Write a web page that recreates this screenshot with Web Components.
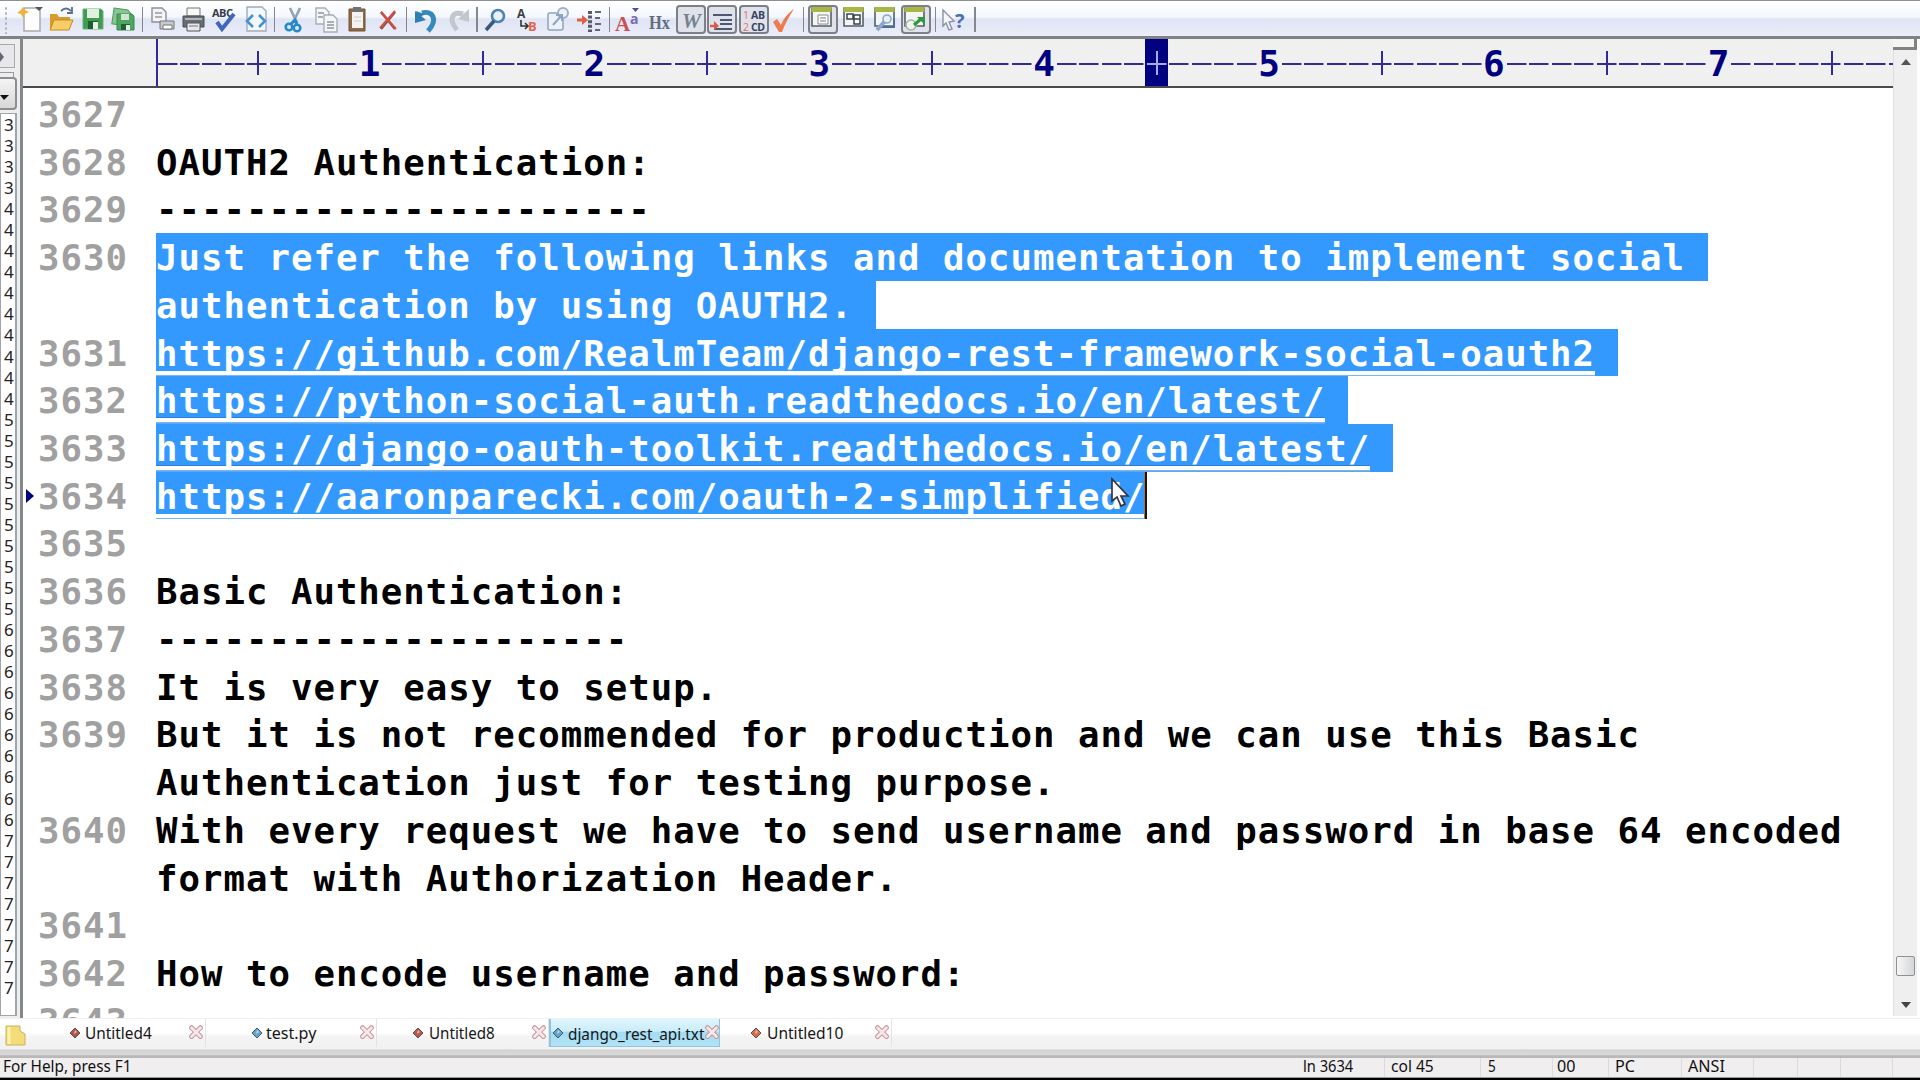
<!DOCTYPE html>
<html lang="en">
<head>
<meta charset="utf-8">
<title>django_rest_api.txt</title>
<style>
html,body{margin:0;height:1080px;width:1920px;overflow:hidden;background:#000}
</style>
</head>
<body>
<edit-app></edit-app>
<script>
const def=(name,css,html,init)=>customElements.define(name,class extends HTMLElement{
  connectedCallback(){
    if(this.shadowRoot)return;
    const r=this.attachShadow({mode:'open'});
    r.innerHTML='<style>'+css+'</style>'+(typeof html==='function'?html(this):html);
    if(init)init(this,r);
  }
});

/* text squeezed to a given pixel width */
def('fit-text',
 ':host{display:block;white-space:pre;flex:none;overflow:visible}span{display:inline-block;transform-origin:0 50%}',
 '<span><slot></slot></span>',
 (el,r)=>{const w=+el.getAttribute('w');el.style.width=w+'px';
   const s=r.querySelector('span');s.style.transform='scaleX('+w/s.offsetWidth+')';});

const win='<path d="M3 4h19v18H3z" fill="#f4f6f4" stroke="#54606c" stroke-width="1.6"/><path d="M2.5 3h20v5h-20z" fill="#a9b545"/>';
const ICONS={
 new:'<path d="M7 4h16v23H7z" fill="#fdfdfb" stroke="#a9a9ae" stroke-width="1.5"/><path d="M6 3l2 3 4 2-4 2-2 4-2-4-4-1 4-3z" fill="#efb23e"/><path d="M18 3h8l-4 4z" fill="#555"/>',
 open:'<path d="M3 25V10h7l2 3h11v12z" fill="#d99b2b"/><path d="M3 26l4-10h19l-4 10z" fill="#f6cd66" stroke="#c58b27"/><path d="M14 7q5-5 10 0M25 3v6h-5" fill="none" stroke="#5b6f93" stroke-width="1.8"/>',
 save:'<path d="M4 5h18l2 2v18H4z" fill="#3f9b50" stroke="#71b07b"/><path d="M8 5h12v9H8z" fill="#dff0df"/><path d="M9 17h10v8H9z" fill="#1d5d34"/><path d="M14 18h5v7h-5z" fill="#e7f2e8"/>',
 saveall:'<path d="M4 5h14l3 3v13H4z" fill="#8ac492" stroke="#4d9b5c" transform="rotate(8 12 12)"/><path d="M8 10h15l2 2v14H8z" fill="#4fa660" stroke="#3a8a4b"/><path d="M12 10h8v6h-8z" fill="#cfe7d0"/><path d="M12 20h9v6h-9z" fill="#225f35"/><path d="M17 21h4v5h-4z" fill="#e2f0e2"/>',
 preview:'<path d="M4 4h10l4 4v10H4z" fill="#f4f4f6" stroke="#8f8f94" stroke-width="1.4"/><path d="M7 9h7M7 13h7" stroke="#999" stroke-width="1.5"/><path d="M12 17h14v8H12z" fill="#c6c9cd" stroke="#75777c"/><path d="M15 21h9v4h-9z" fill="#fff" stroke="#777"/>',
 print:'<path d="M8 4h13v8H8z" fill="#f8f8f8" stroke="#777"/><path d="M4 12h21v11H4z" fill="#686c73" stroke="#494d54"/><path d="M6 15h17" stroke="#b3b6bb" stroke-width="2"/><path d="M8 19h13v8H8z" fill="#e6e8ea" stroke="#555"/><path d="M10 22h9" stroke="#777"/>',
 spell:'<text x="1" y="13" font-size="11" font-weight="700" fill="#353b47" textLength="21">ABC</text><path d="M6 18l5 7 12-15" fill="none" stroke="#3f66b8" stroke-width="4"/>',
 code:'<path d="M5 3h15l4 4v20H5z" fill="#f4f7fb" stroke="#a3acba" stroke-width="1.4"/><path d="M11 11l-6 6 6 6M17 11l6 6-6 6" fill="none" stroke="#4492d0" stroke-width="2.6"/>',
 cut:'<path d="M10 4l7 15M20 4l-7 15" stroke="#8fa4b8" stroke-width="2.6"/><circle cx="9" cy="23" r="3.3" fill="none" stroke="#258bc7" stroke-width="2.6"/><circle cx="17" cy="24" r="3.3" fill="none" stroke="#258bc7" stroke-width="2.6"/><path d="M11 20l4-4 2 4" stroke="#258bc7" stroke-width="3" fill="none"/>',
 copy:'<g fill="#f5f6f8" stroke="#a8adb5" stroke-width="1.4"><path d="M4 4h9l4 4v12H4z"/><path d="M12 11h9l4 4v13H12z"/></g><path d="M6 9h6M6 13h5M15 18h7M15 21h7M15 24h7" stroke="#8e959f" stroke-width="1.3"/>',
 paste:'<path d="M6 5h16v22H6z" fill="#8e6a45" stroke="#6d5238"/><path d="M9 8h11v16H9z" fill="#f4f3f1"/><path d="M10 3h8v5h-8z" fill="#6e7176"/><path d="M11 13h7M11 17h7" stroke="#ccc"/>',
 del:'<path d="M7 8l14 17M21 8L7 25" stroke="#7e5a58" stroke-width="2.6"/><path d="M7 8l15 17M21 7L6 24" stroke="#d84c3c" stroke-width="2"/>',
 undo:'<path d="M9 9c10-3 17 6 6 18" fill="none" stroke="#3489bd" stroke-width="5"/><path d="M2 7v12l11-3z" fill="#2f7fb3"/><path d="M3 7l8 3-5 5z" fill="#2f7fb3"/>',
 redo:'<path d="M19 10C8 7 4 15 13 26" fill="none" stroke="#c3c7cd" stroke-width="5"/><path d="M25 5v13l-11-3z" fill="#c3c7cd"/>',
 find:'<circle cx="16" cy="12" r="6" fill="#e7f1fb" stroke="#4e82b3" stroke-width="2.6"/><path d="M12 17l-8 9" stroke="#38597c" stroke-width="3.6"/>',
 repl:'<text x="3" y="14" font-size="12" font-weight="700" fill="#3c3f46">A</text><text x="14" y="27" font-size="13" font-weight="700" fill="#e2644e">B</text><path d="M7 16v6h6M11 19l3 3-3 3" fill="none" stroke="#333" stroke-width="1.6"/>',
 goto:'<rect x="3" y="9" width="15" height="17" rx="2" fill="#edf2f8" stroke="#8ea3bd" stroke-width="1.5"/><circle cx="18" cy="9" r="5" fill="#edf2f8" stroke="#9eb0c6" stroke-width="2"/><path d="M8 21l9-10M11 11h6v6" fill="none" stroke="#8aa4c4" stroke-width="2"/>',
 indent:'<path d="M0 16h6" stroke="#dd6144" stroke-width="3"/><path d="M5 11l6 5-6 5z" fill="#dd6144"/><path d="M13 7v21" stroke="#555a64" stroke-width="4" stroke-dasharray="3 1.6"/><path d="M18 8h6M18 14h5M18 20h6M18 26h5" stroke="#64697a" stroke-width="1.8"/>',
 aa:'<text x="0" y="27" font-size="21" font-weight="700" font-family="Liberation Serif" fill="#c95152">A</text><text x="15" y="20" font-size="14" font-weight="700" fill="#776bb5">a</text><path d="M17 4h7l-3.5 4z" fill="#5a4a9a"/>',
 hx:'<text x="3" y="25" font-size="19" font-weight="700" font-family="Liberation Serif" fill="#626c7f" textLength="21" lengthAdjust="spacingAndGlyphs">Hx</text>',
 w:'<text x="5" y="24" font-size="20" font-weight="700" font-style="italic" font-family="Liberation Serif" fill="#75818f" textLength="19" lengthAdjust="spacingAndGlyphs">W</text>',
 wrap:'<path d="M5 11h19M12 16h12M12 20h12M6 25h18" stroke="#4c5875" stroke-width="2"/><path d="M2 22h7" stroke="#dc5b44" stroke-width="2.4"/><path d="M6 17l5 5-5 4z" fill="#dc5b44"/>',
 abcd:'<g font-weight="700" font-size="10.5"><text x="3" y="14.5" fill="#e2716a" font-weight="400">1</text><text x="3" y="26.5" fill="#e2716a" font-weight="400">2</text><text x="11" y="14.5" fill="#38435f" textLength="14">AB</text><text x="11" y="26.5" fill="#38435f" textLength="14">CD</text></g>',
 check:'<path d="M3 18l4-3 4 6C14 14 18 9 24 5c-5 7-9 15-12 23H9z" fill="#ee7b4d"/>',
 w1:win+'<path d="M9 11h10v9H9z" fill="#fff" stroke="#888"/><path d="M11 14h6M11 17h6" stroke="#777"/>',
 w2:win+'<path d="M6 10h6v5H6zM13 11h6v9h-6zM13 15h6" fill="#fff" stroke="#39444c" stroke-width="1.5"/>',
 w3:win+'<path d="M22 14v9H8" fill="none" stroke="#4b6f9a" stroke-width="2"/><path d="M5 26l8-9" stroke="#8ba7c9" stroke-width="4"/><circle cx="15" cy="15" r="4" fill="#e6eef7" stroke="#8ba7c9" stroke-width="1.6"/>',
 w4:win+'<circle cx="9" cy="21" r="5" fill="#eef3ef" stroke="#a5b3a7" stroke-width="1.6"/><path d="M12 21l7-6" stroke="#2a9a3a" stroke-width="3"/><path d="M15 13h8v8z" fill="#2a9a3a"/>',
 help:'<path d="M2 6l11 11-5 1 3 7-3 1-3-7-3 3z" fill="#f4f6fa" stroke="#8a93a3" stroke-width="1.4"/><text x="14" y="24" font-size="20" font-weight="700" fill="#4a6fb2">?</text>'
};
def('tool-icon',
 ':host{display:block;flex:none;width:30px;height:30px}:host([on]) svg{background:#dfe2ea;box-shadow:inset 0 0 0 2px #7d8087;border-radius:4px}svg{display:block;width:30px;height:29px;box-sizing:border-box;overflow:visible}',
 el=>'<svg viewBox="-1 1 30 29" font-family="Open Sans">'+ICONS[el.getAttribute('name')]+'</svg>');
const BAR=[['new',31],['open',61],['save',92.5],['saveall',123],['|',142.5],['preview',162],['print',193],['spell',225],['code',256],['|',274.7],['cut',294],['copy',326],['paste',357],['del',388],['|',406.5],['undo',427],['redo',458],['|',477],['find',496],['repl',528],['goto',559],['indent',591],['|',609.5],['aa',629],['hx',660],['w',691,1],['wrap',722.3,1],['abcd',753.6,1],['check',784.5],['|',803.5],['w1',823,1],['w2',855],['w3',886],['w4',916,1],['|',935.5],['help',955],['|',975]];
def('tool-bar',
 `:host{display:flex;height:39px;flex:none;box-sizing:border-box;padding-top:4px;border-top:1px solid #8f8f8f;border-bottom:3px solid #808284;background:linear-gradient(#fff,#f4f7fe 45%,#dfe5f5 52%,#e6e9f6 80%,#eceffa)}
 i{display:block;flex:none;width:1.5px;height:25px;background:#85878c;margin-top:2px}
 b{flex:none;width:4px;height:28px;margin:1px 0 0 4px;background:radial-gradient(circle,#b5b5ba 1px,transparent 1.5px) 0 0/4px 5px}`,
 ()=>{let x=8;return '<b></b>'+BAR.map(([n,c,on])=>{const w=n==='|'?1.5:30,l=c-w/2,m=l-x;x=l+w;
   return n==='|'?`<i style="margin-left:${m}px"></i>`:`<tool-icon name="${n}" ${on?'on':''} style="margin-left:${m}px"></tool-icon>`;}).join('');});

def('side-list',
 `:host{display:flex;width:23px;flex:none;height:979px;background:#eee;box-sizing:border-box;border-right:3px solid #85888b;overflow:hidden;font:17px/21.05px "Noto Sans",sans-serif;color:#222}
 .c{width:17px;flex:none;display:flex;flex-direction:column;box-sizing:border-box}
 .a{height:24px;margin:5px 2px 0 0;border:1px solid #aaa;border-left:0;background:#e8e8ec;box-sizing:border-box}
 .t{height:4px;margin:4px 3px 0 0;border:1px solid #999;border-left:0;border-bottom:0}
 .d{height:33px;border:2px solid #8c8f91;border-left:0;border-radius:0 4px 4px 0;box-sizing:border-box;background:linear-gradient(#f4f4f4,#d8d8d8)}
 .l{height:903px;margin-top:3px;border:1px solid #a2a5a8;border-right:2px solid #9ea5ad;background:#fff;box-sizing:border-box;padding:0 0 0 3px}
 .l div{height:21.05px} svg{display:block}`,
 '<div class="c"><div class="a"><svg width="8" height="22"><path d="M0 7l4 5-4 5z" fill="#667"/></svg></div><div class="t"></div><div class="d"><svg width="13" height="29"><path d="M0 16h9l-5 5z" fill="#111"/></svg></div><div class="l">'
  +('3'.repeat(4)+'4'.repeat(10)+'5'.repeat(10)+'6'.repeat(10)+'7'.repeat(8)).split('').map(d=>`<div>${d}</div>`).join('')+'</div></div>');

def('ruler-bar',
 `:host{display:flex;flex:none;height:49px;box-sizing:border-box;border-bottom:2px solid #4a4a4c;background:#f0f0f0;padding-left:133px;overflow:hidden;font:bold 36px/50px "DejaVu Sans Mono",monospace;color:#000080;--k:#33299a}
 .c{width:22.49px;flex:none;height:47px;text-align:center;background:linear-gradient(var(--k),var(--k)) 1.5px 24px/19.5px 2px no-repeat}
 .c:first-of-type{box-shadow:inset 2px 0 #33299a}
 .p{background:linear-gradient(var(--k),var(--k)) 1.5px 24px/19.5px 2px no-repeat,linear-gradient(var(--k),var(--k)) 10.8px 12px/2px 24px no-repeat}
 .n{background:none}.h{background-color:#000080;--k:#a9a9e6}`,
 ()=>{let s='';for(let i=0;i<78;i++)s+=`<div class="c${i%10==4?' p':i%10==9?' n':''}${i==44?' h':''}">${i%10==9?(i+1)/10:''}</div>`;return s;});

def('code-line',
 `:host{display:flex;flex:none;height:47.72px;line-height:49px;white-space:pre;font-weight:bold;font-size:35.7px;letter-spacing:1px;font-family:"DejaVu Sans Mono",monospace}
 .m{width:15px;flex:none;display:flex;align-items:center}.g{width:118px;flex:none;color:#a0a0a0}
 .t{height:47.72px;flex:none;color:#000}
 :host([sel]) .t{background:#3399ff;color:#fff}
 :host([url]) .t{background:#3399ff;color:#fff;display:flex;padding-right:22.5px}
 :host([cur]) .t{padding-right:0}
 .u{height:47.72px;background:linear-gradient(#3399ff 41.5px,#2b7fd8 41.5px,#2b7fd8 42px,#fff 42.4px,#f8fcff 46px,#5fa6ec 46.6px)}
 .k{width:3px;height:47px;margin-left:-1px;background:linear-gradient(90deg,#b07038 33%,#161616 33%)}`,
 el=>{const t=el.getAttribute('text')||'',n=el.getAttribute('n')||'';
  const mark=el.hasAttribute('cur')?'<svg width="12" height="16"><path d="M3 1l8 7-8 7z" fill="#000080"/></svg>':'';
  return `<div class="m">${mark}</div><div class="g">${n}</div><div class="t">${el.hasAttribute('url')?`<span class="u">${t}</span>`:t}</div>${el.hasAttribute('cur')?'<div class="k"></div>':''}`;});

const LINES=[['3627',''],['3628','OAUTH2 Authentication:'],['3629','----------------------'],
 ['3630','Just refer the following links and documentation to implement social ','sel'],['','authentication by using OAUTH2. ','sel'],
 ['3631','https://github.com/RealmTeam/django-rest-framework-social-oauth2','url'],
 ['3632','https://python-social-auth.readthedocs.io/en/latest/','url'],
 ['3633','https://django-oauth-toolkit.readthedocs.io/en/latest/','url'],
 ['3634','https://aaronparecki.com/oauth-2-simplified/','url cur'],['3635',''],
 ['3636','Basic Authentication:'],['3637','---------------------'],['3638','It is very easy to setup.'],
 ['3639','But it is not recommended for production and we can use this Basic'],['','Authentication just for testing purpose.'],
 ['3640','With every request we have to send username and password in base 64 encoded'],['','format with Authorization Header.'],
 ['3641',''],['3642','How to encode username and password:'],['3643','']];
def('text-pane',
 `:host{display:block;flex:none;height:930px;padding-top:2px;box-sizing:border-box;overflow:hidden;background:#fff;position:relative}
 svg{position:absolute;left:1087px;top:389px}`,
 ()=>LINES.map(([n,t,a])=>`<code-line n="${n}" text="${t}" ${a||''}></code-line>`).join('')+
 '<svg width="22" height="32"><path d="M2 2v22l5-4 4 9 4-2-4-8h7z" fill="#f7fbff" stroke="#34353e" stroke-width="1.7"/></svg>');

def('scroll-bar',
 `:host{display:flex;flex-direction:column;width:27px;flex:none;height:979px;background:#fff}
 .s{width:24px;height:11px;flex:none;box-sizing:border-box;border-right:3px solid #808284;border-bottom:3px solid #808284;background:#f5f5f5}
 .b{width:24px;height:966px;flex:none;background:#efefef;border-left:1px solid #e0e0e0;box-sizing:border-box;display:flex;flex-direction:column;align-items:center;padding:7px 0 0}
 .h{width:19px;height:20px;flex:none;margin-top:890px;box-sizing:border-box;border:1.5px solid #8f9295;border-radius:2px;background:linear-gradient(90deg,#f6f6f6,#d5d6d8)}
 svg{display:block;flex:none}`,
 '<div class="s"></div><div class="b"><svg width="12" height="9"><path d="M1 8l5-6 5 6z" fill="#555"/></svg><div class="h"></div><svg width="12" height="9" style="margin-top:24px"><path d="M1 2h10l-5 6z" fill="#444"/></svg></div>');

def('doc-tab',
 `:host{display:flex;width:171.5px;flex:none;height:28px;box-sizing:border-box;border-right:1px solid #e3e3e6;align-items:center}
 :host([on]){background:linear-gradient(#dff5fd,#c9edfb 45%,#a4dcf3 50%,#b2e3f6);border:1px solid #8fc4dc;border-width:0 1px 1px 2px}
 :host([on]) fit-text{padding-top:2px}
 svg{flex:none;display:block}`,
 el=>{const [d,t,w,c]=['d','t','w','c'].map(k=>+el.getAttribute(k));
  return `<svg width="12" height="14" style="margin-left:${d}px"><path d="M6 2l5 5-5 5-5-5z" fill="${el.getAttribute('color')}" stroke="#55565c"/><path d="M6 4l2 2-3 2z" fill="#fff" opacity=".6"/></svg><fit-text w="${w}" style="margin-left:${t}px"><slot></slot></fit-text><svg width="16" height="16" viewBox="-1 0 18 18" style="margin-left:${c}px"><path d="M3 3l10 10M13 3L3 13" stroke="#c4959d" stroke-width="5.4" stroke-linecap="round"/><path d="M3 3l10 10M13 3L3 13" stroke="#f8e6e9" stroke-width="3.2" stroke-linecap="round"/></svg>`;});
def('tab-strip',
 `:host{display:flex;flex:none;height:40px;box-sizing:border-box;padding:0 0 0 5px;border-top:1px solid #f0f0f0;background:linear-gradient(#fff 35%,#f4f4f5 45%,#f1f1f2 76%,#d2d2d2 80%,#dadada 92%,#b8b8b8 94%);font:17px/22px "Noto Sans",sans-serif;color:#161616}
 .f{margin:5px 8px 0 0;flex:none}`,
 '<svg class="f" width="21" height="24"><path d="M1 2h14v5l5 3v11H1z" fill="#f3dc79" stroke="#cbb25a"/><path d="M4 3v17" stroke="#fff3b0" stroke-width="3"/></svg>'+
 '<doc-tab color="#b55240" d="35" t="4" w="67" c="36">Untitled4</doc-tab><doc-tab color="#5fa5cf" d="45" t="3" w="50" c="43">test.py</doc-tab><doc-tab color="#c05548" d="35" t="5" w="66" c="36">Untitled8</doc-tab><doc-tab on color="#5fa5cf" d="1" t="4" w="136" c="0">django_rest_api.txt</doc-tab><doc-tab color="#dc6a42" d="30" t="5" w="76" c="31">Untitled10</doc-tab>');

def('status-bar',
 `:host{display:flex;flex:none;height:20px;box-sizing:border-box;background:#f0eeee;border-bottom:1px solid #999;font:17px/16px "Noto Sans",sans-serif;color:#111}
 div{box-sizing:border-box;border-left:1px solid #dcdadb;flex:none;height:19px}.z{border:0}`,
 ()=>'<div class="z" style="width:1300px;padding-left:3px"><fit-text w="129">For Help, press F1</fit-text></div>'+
  [['ln 3634',84,3,50],['col 45',96,6,43],['5',72,7,8],['00',56,4,18],['PC',73,6,20],['ANSI',72,6,37],['',44],['',43],['',52],['',28]].map(([t,w,p,f],i)=>`<div class="${i?'':'z'}" style="width:${w}px;padding-left:${p||0}px">${t?`<fit-text w="${f}">${t}</fit-text>`:''}</div>`).join(''));

def('edit-app',
 `:host{display:flex;flex-direction:column;width:1920px;height:1080px;background:#000;overflow:hidden}
 .m{display:flex;height:979px;flex:none;background:#fff}.e{width:1870px;flex:none;display:flex;flex-direction:column;overflow:hidden}`,
 '<tool-bar></tool-bar><div class="m"><side-list></side-list><div class="e"><ruler-bar></ruler-bar><text-pane></text-pane></div><scroll-bar></scroll-bar></div><tab-strip></tab-strip><status-bar></status-bar>');
</script>
</body>
</html>
